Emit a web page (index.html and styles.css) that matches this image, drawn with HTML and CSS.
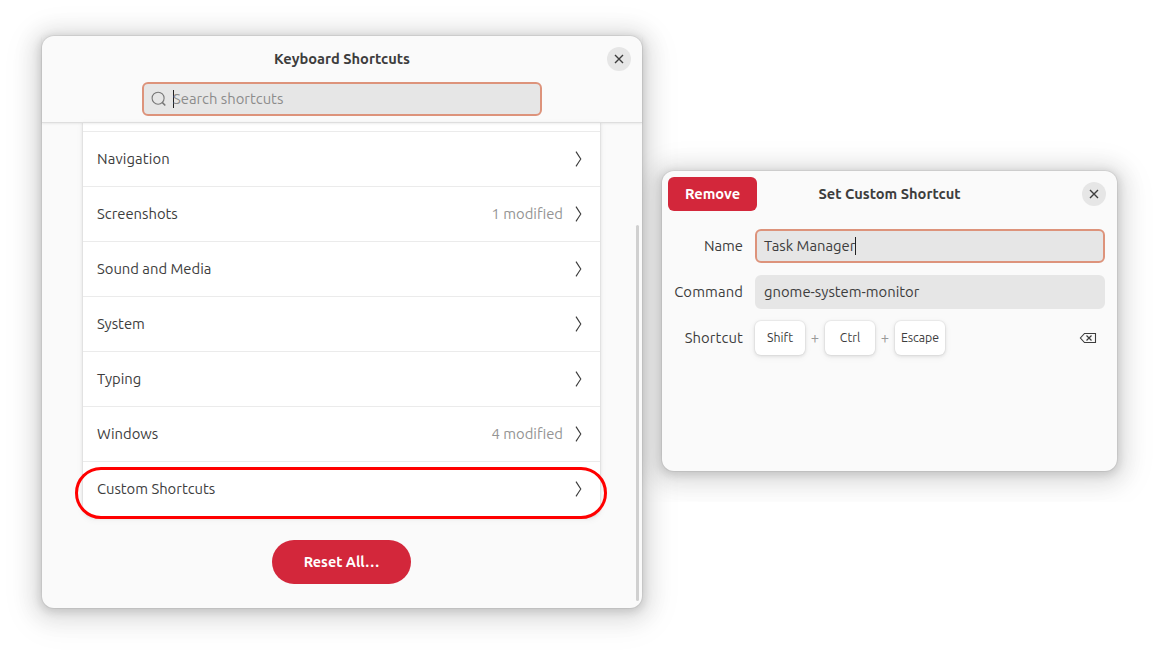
FILE: index.html
```html
<!DOCTYPE html>
<html lang="en">
<head>
<meta charset="utf-8">
<title>Keyboard Shortcuts</title>
<link rel="stylesheet" href="styles.css">
</head>
<body>
<svg class="sprites" width="0" height="0">
  <symbol id="chevron" viewBox="0 0 16 16"><path d="M6 .6 Q8.6 4.7 10.8 8 Q8.6 11.3 6 15.4" fill="none" stroke="#3d3d3d" stroke-width="1.15"/></symbol>
  <symbol id="close" viewBox="0 0 24 24"><path d="M8 8l8 8M16 8l-8 8" fill="none" stroke="#3d3d3d" stroke-width="1.4"/></symbol>
</svg>
<main class="desktop">
  <section class="window shortcuts">
    <header class="header">
      <div class="titlebar">
        <h1 class="title">Keyboard Shortcuts</h1>
        <button class="close" aria-label="Close"><svg width="24" height="24"><use href="#close"/></svg></button>
      </div>
      <div class="entry focused search">
        <svg class="search-icon" width="16" height="16" viewBox="0 0 16 16"><circle cx="7.1" cy="7.2" r="6" fill="none" stroke="#777" stroke-width="1.1"/><path d="M11.2 11.4L14.3 14.5" stroke="#777" stroke-width="1.5"/></svg>
        <span class="caret"></span><span class="placeholder">Search shortcuts</span>
      </div>
    </header>
    <div class="content">
      <div class="list">
        <div class="row partial"></div>
        <div class="row"><span class="name wide">Navigation</span><svg width="16" height="16"><use href="#chevron"/></svg></div>
        <div class="row"><span class="name">Screenshots</span><span class="modified">1 modified</span><svg width="16" height="16"><use href="#chevron"/></svg></div>
        <div class="row"><span class="name">Sound and Media</span><svg width="16" height="16"><use href="#chevron"/></svg></div>
        <div class="row"><span class="name">System</span><svg width="16" height="16"><use href="#chevron"/></svg></div>
        <div class="row"><span class="name">Typing</span><svg width="16" height="16"><use href="#chevron"/></svg></div>
        <div class="row"><span class="name">Windows</span><span class="modified">4 modified</span><svg width="16" height="16"><use href="#chevron"/></svg></div>
        <div class="row last"><span class="name">Custom Shortcuts</span><svg width="16" height="16"><use href="#chevron"/></svg><span class="highlight"></span></div>
      </div>
      <button class="reset">Reset All…</button>
      <div class="scrollbar"></div>
    </div>
  </section>

  <section class="window custom">
    <header class="titlebar custom-bar">
      <button class="remove">Remove</button>
      <h2 class="title">Set Custom Shortcut</h2>
      <button class="close" aria-label="Close"><svg width="24" height="24"><use href="#close"/></svg></button>
    </header>
    <div class="form">
      <span class="label">Name</span>
      <div class="entry focused"><span>Task Manager</span><span class="caret"></span></div>
      <span class="label wide">Command</span>
      <div class="entry"><span>gnome-system-monitor</span></div>
      <span class="label wide">Shortcut</span>
      <div class="keys">
        <kbd class="key">Shift</kbd><span class="plus">+</span><kbd class="key">Ctrl</kbd><span class="plus">+</span><kbd class="key">Escape</kbd>
        <svg class="backspace" width="18" height="14" viewBox="0 0 18 14"><path d="M5.5 2.5H16.5V11.5H5.5L1.4 7Z" fill="none" stroke="#3d3d3d" stroke-width="1.1"/><path d="M7.5 4.5l5 5M12.5 4.5l-5 5" stroke="#3d3d3d" stroke-width="1.2"/></svg>
      </div>
    </div>
  </section>
</main>
</body>
</html>
```
FILE: styles.css
```css
* { box-sizing: border-box; }
body {
  margin: 0;
  background: #fff;
  color: #3d3d3d;
  font: 370 14.8px/20px Ubuntu, "Noto Sans", sans-serif;
}
button { border: 0; padding: 0; font: inherit; color: inherit; }
.sprites { position: absolute; }
.desktop { position: relative; width: 1159px; height: 656px; overflow: hidden; }
.window {
  position: absolute;
  background: #fafafa;
  border-radius: 12px;
  box-shadow: 0 0 0 1px rgba(0,0,0,.05), 0 2px 8px 2px rgba(0,0,0,.13), 0 3px 20px 10px rgba(0,0,0,.09), 0 6px 32px 16px rgba(0,0,0,.04);
}
.shortcuts { left: 42px; top: 36px; width: 600px; height: 572px; display: flex; flex-direction: column; }
.custom { left: 662px; top: 171px; width: 455px; height: 300px; clip-path: inset(-60px -42px -31px -20px); }

.header { height: 87px; border-bottom: 1px solid #dedede; box-shadow: 0 1px 2px rgba(0,0,0,.07); z-index: 1; }
.titlebar { height: 46px; display: grid; grid-template-columns: 1fr auto 1fr; align-items: center; padding: 0 11px; }
.title { grid-column: 2; margin: 0; font-size: 14.67px; font-weight: 600; line-height: 20px; white-space: nowrap; }
.close { grid-column: 3; justify-self: end; width: 24px; height: 24px; border-radius: 50%; background: #e6e6e6; }
.close svg { display: block; }

.entry { height: 34px; border-radius: 6px; border: 2px solid #e6e6e6; background: #e6e6e6; display: flex; align-items: center; padding: 0 7px; white-space: nowrap; }
.entry.focused { border-color: #dd937b; }
.search { width: 400px; margin: 0 auto; }
.search-icon { margin-right: 6px; }
.caret { width: 1px; height: 18px; background: #222; }
.search .caret { margin-right: -1px; }
.placeholder { color: #8c8c8c; }

.content { flex: 1; position: relative; display: flex; flex-direction: column; align-items: center; padding-right: 1px; }
.list { width: 517px; background: #fff; border-radius: 0 0 12px 12px; box-shadow: 0 0 0 1px rgba(0,0,0,.03), 0 1px 3px 1px rgba(0,0,0,.07), 0 2px 6px 2px rgba(0,0,0,.03); }
.row { position: relative; height: 55px; border-bottom: 1px solid #ebebeb; display: flex; align-items: center; padding: 0 14px; }
.row.partial { height: 9px; }
.row.last { border-bottom-color: transparent; }
.name { margin-right: auto; }
.wide { letter-spacing: .12px; }
.modified { color: #949494; margin-right: 7px; }
.highlight { position: absolute; left: -8px; top: 5px; width: 532px; height: 52px; border: 3px solid #f00; border-radius: 26px; }
.reset { margin-top: 23px; width: 139px; height: 44px; border-radius: 22px; background: #d3273b; color: #fff; font-size: 14.4px; font-weight: 600; }
.scrollbar { position: absolute; right: 3px; top: 102px; width: 3px; height: 376px; border-radius: 2px; background: #d0d0d0; }

.custom-bar { padding-left: 6px; }
.custom-bar .title { grid-row: 1; margin-left: 5px; }
.remove { grid-row: 1; width: 89px; height: 34px; border-radius: 6px; background: #d3273b; color: #fff; font-size: 14.67px; font-weight: 600; }
.form { display: grid; grid-template-columns: 69px 350px; column-gap: 12px; row-gap: 12px; align-items: center; padding: 12px 12px 0; }
.label { justify-self: end; white-space: nowrap; }
.keys { display: flex; align-items: center; height: 34px; }
.key { width: 50px; height: 34px; background: #fff; border-radius: 6px; font: 370 12.3px/33px Ubuntu, "Noto Sans", sans-serif; text-align: center; box-shadow: 0 0 0 1px rgba(0,0,0,.03), 0 1px 3px 1px rgba(0,0,0,.07), 0 2px 6px 2px rgba(0,0,0,.03); }
.plus { width: 20px; text-align: center; color: #999; }
.backspace { margin-left: auto; margin-right: 8px; }
```
